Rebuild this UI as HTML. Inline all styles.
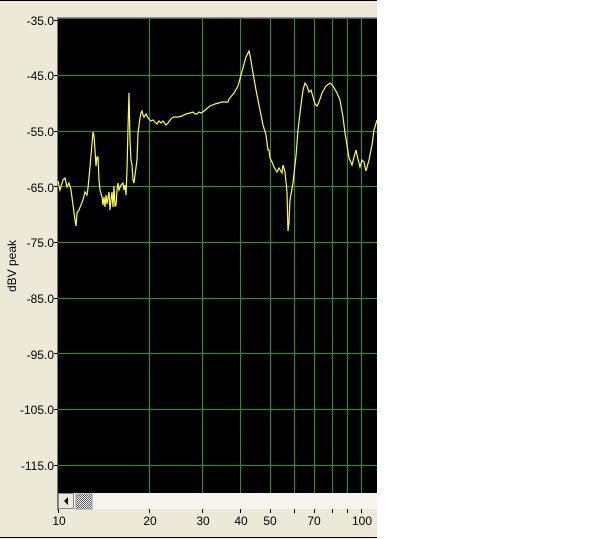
<!DOCTYPE html>
<html><head><style>
html,body{margin:0;padding:0;background:#fff;}
#wrap{position:relative;width:615px;height:539px;overflow:hidden;background:#fff;}
#left{position:absolute;left:0;top:0;width:377px;height:539px;background:#ece9d8;border-top:1px solid #000;box-sizing:border-box;}
.yl{position:absolute;right:calc(377px - 54px);font:12px "Liberation Sans",sans-serif;color:#000;line-height:12px;}
.xl{position:absolute;top:513px;font:12px "Liberation Sans",sans-serif;color:#000;transform:translateX(-50%);}
#ylab{position:absolute;left:12px;top:265px;transform:translate(-50%,-50%) rotate(-90deg);font:12px "Liberation Sans",sans-serif;white-space:nowrap;}
</style></head><body><div id="wrap">
<div id="left">
<div class="yl" style="top:14px">-35.0</div>
<div class="yl" style="top:69px">-45.0</div>
<div class="yl" style="top:125px">-55.0</div>
<div class="yl" style="top:181px">-65.0</div>
<div class="yl" style="top:236px">-75.0</div>
<div class="yl" style="top:292px">-85.0</div>
<div class="yl" style="top:348px">-95.0</div>
<div class="yl" style="top:403px">-105.0</div>
<div class="yl" style="top:459px">-115.0</div>
<div id="ylab">dBV peak</div>
<div class="xl" style="left:59px">10</div>
<div class="xl" style="left:150px">20</div>
<div class="xl" style="left:203px">30</div>
<div class="xl" style="left:241px">40</div>
<div class="xl" style="left:270px">50</div>
<div class="xl" style="left:314px">70</div>
<div class="xl" style="left:362px">100</div>
</div>
<svg width="615" height="539" style="position:absolute;left:0;top:0">
<rect x="57" y="18" width="320" height="475" fill="#000"/>
<line x1="57" y1="18" x2="377" y2="18" stroke="#777" stroke-width="1.5"/>
<line x1="57.5" y1="18" x2="57.5" y2="510" stroke="#777"/>
<g stroke="#1f9a1f" stroke-width="1" shape-rendering="crispEdges">
<line x1="149.5" y1="19" x2="149.5" y2="493"/><line x1="202.5" y1="19" x2="202.5" y2="493"/>
<line x1="240.5" y1="19" x2="240.5" y2="493"/><line x1="270.5" y1="19" x2="270.5" y2="493"/>
<line x1="294.5" y1="19" x2="294.5" y2="493"/><line x1="314.5" y1="19" x2="314.5" y2="493"/>
<line x1="332.5" y1="19" x2="332.5" y2="493"/><line x1="347.5" y1="19" x2="347.5" y2="493"/>
<line x1="361.5" y1="19" x2="361.5" y2="493"/>
<line x1="58" y1="75.5" x2="377" y2="75.5"/><line x1="58" y1="131.5" x2="377" y2="131.5"/>
<line x1="58" y1="186.5" x2="377" y2="186.5"/><line x1="58" y1="242.5" x2="377" y2="242.5"/>
<line x1="58" y1="298.5" x2="377" y2="298.5"/><line x1="58" y1="353.5" x2="377" y2="353.5"/>
<line x1="58" y1="409.5" x2="377" y2="409.5"/><line x1="58" y1="465.5" x2="377" y2="465.5"/>
</g>
<g stroke="#000" shape-rendering="crispEdges"><line x1="54" y1="20.5" x2="58" y2="20.5"/><line x1="54" y1="75.5" x2="58" y2="75.5"/><line x1="54" y1="131.5" x2="58" y2="131.5"/><line x1="54" y1="186.5" x2="58" y2="186.5"/><line x1="54" y1="242.5" x2="58" y2="242.5"/><line x1="54" y1="298.5" x2="58" y2="298.5"/><line x1="54" y1="353.5" x2="58" y2="353.5"/><line x1="54" y1="409.5" x2="58" y2="409.5"/><line x1="54" y1="465.5" x2="58" y2="465.5"/>
<line x1="58.5" y1="509" x2="58.5" y2="513"/><line x1="149.5" y1="509" x2="149.5" y2="513"/><line x1="202.5" y1="509" x2="202.5" y2="513"/><line x1="240.5" y1="509" x2="240.5" y2="513"/><line x1="270.5" y1="509" x2="270.5" y2="513"/><line x1="294.5" y1="509" x2="294.5" y2="513"/><line x1="314.5" y1="509" x2="314.5" y2="513"/><line x1="332.5" y1="509" x2="332.5" y2="513"/><line x1="347.5" y1="509" x2="347.5" y2="513"/><line x1="361.5" y1="509" x2="361.5" y2="513"/></g>
<polyline fill="none" stroke="#ffff40" stroke-width="1.2" points="58,181 60,190 63,180 65,178 67,187 69,183 71,190 73,205 75,220 76,226 77,213 79,210 83,200 85,192 87,195 88,188 90,167 93,132 94,136 95,150 96,166 97,157 98,157 99,180 100,190 102,197 103,205 104,197 105,207 106,195 107,204 109,192 110,210 111,200 112,192 113,207 114,186 115,206 116,205 117,190 118,183 119,190 121,185 123,183 124,190 125,185 126,195 127,170 128,128 129,93 130,140 131,160 132,165 133,180 134,183 135,175 137,160 138,133 140,118 141,113 142,111 143,115 144,117 146,114 148,118 151,121 153,120 155,122 157,124 159,121 161,123 163,121 166,125 168,123 170,120 172,118 174,117 178,117 182,116 186,114 190,113 193,112 195,114 197,114 199,112 201,113 204,111 210,106 215,104 222,102 228,102 229,99 234,93 238,86 241,75 246,57 249,51 250,55 253,73 256,90 260,110 263,125 266,135 268,150 269,150 270,158 272,162 274,167 277,172 279,168 282,173 283,165 285,172 286,182 287,192 288,231 289,222 290,200 293,183 296,156 298,130 301,105 303,90 305,83 307,86 309,92 311,90 313,97 315,104 317,106 319,102 322,93 326,86 330,83 333,86 337,93 340,100 343,117 345,133 347,145 349,158 352,165 354,157 356,150 357,155 360,167 362,160 364,162 366,171 369,160 372,145 374,130 377,120"/>
<defs><pattern id="chk" width="2" height="2" patternUnits="userSpaceOnUse"><rect width="2" height="2" fill="#fff"/><rect width="1" height="1" fill="#555"/><rect x="1" y="1" width="1" height="1" fill="#555"/></pattern></defs>
<rect x="58" y="493" width="319" height="16" fill="#f5f4ef"/>
<rect x="58.5" y="493.5" width="15" height="15" fill="#ece9d8" stroke="#888"/>
<polygon points="68,497 68,505 64,501" fill="#000"/>
<rect x="76" y="494" width="16" height="15" fill="url(#chk)" stroke="#999"/>
<line x1="0" y1="537.5" x2="377" y2="537.5" stroke="#000"/>
</svg>
</div></body></html>
